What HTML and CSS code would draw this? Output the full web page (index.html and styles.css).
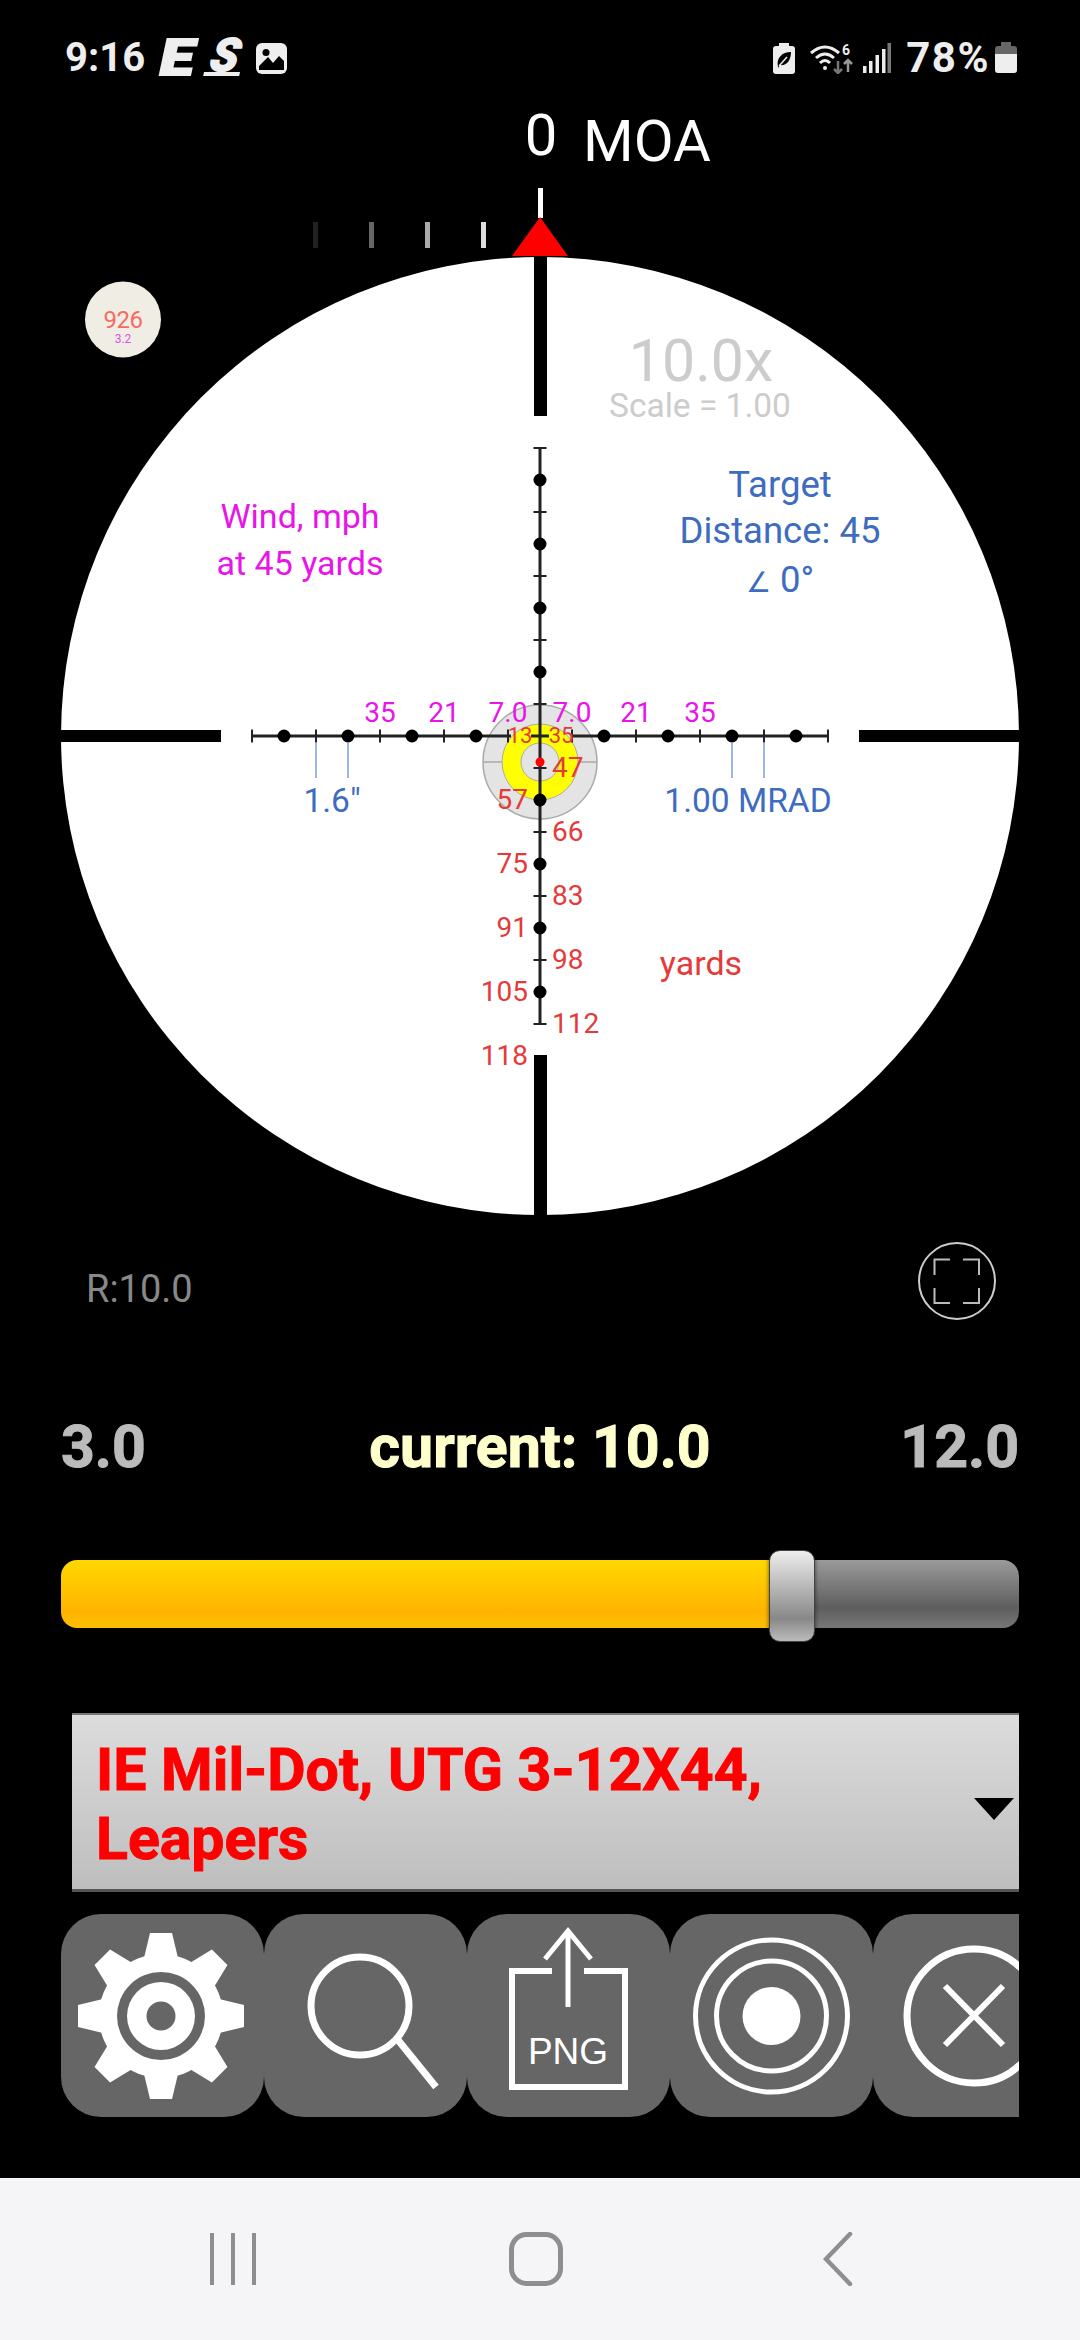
FILE: index.html
```html
<!DOCTYPE html>
<html lang="en">
<head>
    <meta charset="UTF-8">
    <meta name="viewport" content="width=device-width, initial-scale=1.0">
    <title>Reticle</title>
    <link rel="stylesheet" href="styles.css">
</head>
<body>
    <div class="status-bar">
        <div class="status-left">
            <span class="clock">9:16</span>
            <span class="logo-e">E</span>
            <span class="logo-s">S</span>
            <svg class="pic-icon" viewBox="0 0 31 31">
                <rect width="31" height="31" rx="6" fill="#eee"/>
                <circle cx="10" cy="9.500" r="3.500" fill="#000"/>
                <path d="M3 27V23L12 14L17 20L23 13L28 18V27Z" fill="#000"/>
            </svg>
        </div>
        <div class="status-right">
            <svg class="leaf-icon" viewBox="0 0 22 31">
                <path d="M6 0H16V3H19Q22 3 22 6V28Q22 31 19 31H3Q0 31 0 28V6Q0 3 3 3H6Z" fill="#eee"/>
                <path d="M5 24C3 15 9 9 18 9C18 18 13 23 7 22L5 25" fill="#000"/>
                <path d="M6 23L14 14" stroke="#eee" stroke-width="1.500" fill="none"/>
            </svg>
            <svg class="wifi-icon" viewBox="0 0 44 31">
                <path d="M1 10Q15 -2 29 10M6 15Q15 7 24 15M10 20Q15 15 20 20" fill="none" stroke="#eee" stroke-width="3"/>
                <circle cx="15" cy="25" r="2" fill="#eee"/>
                <text class="wifi-six" x="32" y="12">6</text>
                <path d="M28 18V30M24 26L28 30L32 26" fill="none" stroke="#777" stroke-width="2.500"/>
                <path d="M38 29V17M34 21L38 17L42 21" fill="none" stroke="#999" stroke-width="2.500"/>
            </svg>
            <svg class="signal-icon" viewBox="0 0 28 30">
                <rect x="0" y="23" width="3.500" height="7" fill="#eee"/>
                <rect x="6" y="18" width="3.500" height="12" fill="#eee"/>
                <rect x="12.500" y="12" width="3.500" height="18" fill="#eee"/>
                <rect x="19" y="6" width="3.500" height="24" fill="#eee"/>
                <rect x="24.500" y="0" width="3.500" height="30" fill="#777"/>
            </svg>
            <span class="battery-text">78%</span>
            <svg class="battery-icon" viewBox="0 0 22 31">
                <path d="M6 0H16V4H19Q22 4 22 7V12H0V7Q0 4 3 4H6Z" fill="#666"/>
                <path d="M0 12H22V28Q22 31 19 31H3Q0 31 0 28Z" fill="#eee"/>
            </svg>
        </div>
    </div>

    <!-- viewBox uses screen coords so the reticle numbers can be read off the shot -->
    <svg class="scope" viewBox="0 100 1080 1240">
        <text class="moa" x="541" y="155" text-anchor="middle">0</text>
        <text class="moa" x="583" y="161">MOA</text>

        <rect x="538" y="188" width="5" height="30" fill="#fff"/>
        <rect x="313" y="222" width="5" height="26" fill="#222"/>
        <rect x="369" y="222" width="5" height="26" fill="#666"/>
        <rect x="425" y="222" width="5" height="26" fill="#aaa"/>
        <rect x="481" y="222" width="5" height="26" fill="#ddd"/>

        <circle cx="540" cy="736" r="479" fill="#fff"/>
        <polygon points="540,217 568,256 512,256" fill="#f00"/>

        <rect x="534" y="257" width="13" height="159" fill="#000"/>
        <rect x="534" y="1055" width="13" height="160" fill="#000"/>
        <rect x="61" y="730" width="160" height="12" fill="#000"/>
        <rect x="859" y="730" width="160" height="12" fill="#000"/>

        <circle cx="123" cy="319.500" r="38" fill="#f0ede4"/>
        <text class="badge-num" x="123" y="328" text-anchor="middle">926</text>
        <text class="badge-sub" x="123" y="343" text-anchor="middle">3.2</text>

        <text class="power" x="701" y="381" text-anchor="middle">10.0x</text>
        <text class="scale-note" x="700" y="417" text-anchor="middle">Scale = 1.00</text>

        <text class="blue-label" x="780" y="497" text-anchor="middle">Target</text>
        <text class="blue-label" x="780" y="543" text-anchor="middle">Distance: 45</text>
        <text class="blue-label" x="780" y="592" text-anchor="middle"><tspan class="angle-mark">∠</tspan> 0°</text>

        <text class="wind-label" x="300" y="528" text-anchor="middle">Wind, mph</text>
        <text class="wind-label" x="300" y="575" text-anchor="middle">at 45 yards</text>

        <!-- target -->
        <circle cx="540" cy="762" r="57" fill="#e4e4e4" stroke="#aaa" stroke-width="1.500"/>
        <path d="M483 762H597" stroke="#aaa" stroke-width="1.500"/>
        <circle cx="540" cy="762" r="38" fill="#ff0" stroke="#aaa" stroke-width="1"/>
        <circle cx="540" cy="762" r="19" fill="#e4e4e4" stroke="#aaa" stroke-width="1"/>

        <!-- crosshair, horizontal line is broken where the 13 and 35 sit -->
        <path d="M252 736H511M531 736H549M573 736H828M540 448V1024" stroke="#222" stroke-width="3"/>
        <path d="M252 729.500v13M316 729.500v13M380 729.500v13M444 729.500v13M508 729.500v13M572 729.500v13M636 729.500v13M700 729.500v13M764 729.500v13M828 729.500v13" stroke="#222" stroke-width="2"/>
        <path d="M533.500 448h13M533.500 512h13M533.500 576h13M533.500 640h13M533.500 704h13M533.500 768h13M533.500 832h13M533.500 896h13M533.500 960h13M533.500 1024h13" stroke="#222" stroke-width="2"/>
        <path d="M284 736h0M348 736h0M412 736h0M476 736h0M604 736h0M668 736h0M732 736h0M796 736h0M540 480h0M540 544h0M540 608h0M540 672h0M540 800h0M540 864h0M540 928h0M540 992h0" stroke="#000" stroke-width="13" stroke-linecap="round"/>
        <circle cx="540" cy="762" r="4.500" fill="#f00"/>

        <!-- wind numbers -->
        <text class="wind-num" x="380" y="722" text-anchor="middle">35</text>
        <text class="wind-num" x="444" y="722" text-anchor="middle">21</text>
        <text class="wind-num" x="508" y="722" text-anchor="middle">7.0</text>
        <text class="wind-num" x="572" y="722" text-anchor="middle">7.0</text>
        <text class="wind-num" x="636" y="722" text-anchor="middle">21</text>
        <text class="wind-num" x="700" y="722" text-anchor="middle">35</text>

        <!-- range numbers -->
        <text class="range-small" x="520" y="743" text-anchor="middle">13</text>
        <text class="range-small" x="561" y="743" text-anchor="middle">35</text>
        <text class="range-num" x="552" y="777">47</text>
        <text class="range-num" x="528" y="809" text-anchor="end">57</text>
        <text class="range-num" x="552" y="841">66</text>
        <text class="range-num" x="528" y="873" text-anchor="end">75</text>
        <text class="range-num" x="552" y="905">83</text>
        <text class="range-num" x="528" y="937" text-anchor="end">91</text>
        <text class="range-num" x="552" y="969">98</text>
        <text class="range-num" x="528" y="1001" text-anchor="end">105</text>
        <text class="range-num" x="552" y="1033">112</text>
        <text class="range-num" x="528" y="1065" text-anchor="end">118</text>
        <text class="yards-label" x="701" y="975" text-anchor="middle">yards</text>

        <!-- subtension marks -->
        <path d="M316 743V778M348 743V778M732 743V778M764 743V778" stroke="#3d6cc0" stroke-width="1"/>
        <text class="sub-label" x="332" y="812" text-anchor="middle">1.6"</text>
        <text class="sub-label" x="748" y="812" text-anchor="middle">1.00 MRAD</text>

        <text class="range-readout" x="86" y="1302">R:10.0</text>
        <circle cx="957" cy="1281" r="38" fill="none" stroke="#ccc" stroke-width="2"/>
        <path d="M950 1259.500H934.500V1275M963 1259.500H979V1275M934.500 1288V1303H950M979 1288V1303H963" fill="none" stroke="#bbb" stroke-width="2"/>
    </svg>

    <div class="zoom-labels">
        <span class="zoom-end">3.0</span>
        <span class="zoom-current">current: 10.0</span>
        <span class="zoom-end zoom-max">12.0</span>
    </div>

    <div class="slider">
        <div class="slider-fill"></div>
        <div class="slider-rest"></div>
        <div class="slider-thumb"></div>
    </div>

    <div class="reticle-select">
        <div class="reticle-name">IE Mil-Dot, UTG 3-12X44, Leapers</div>
        <div class="select-arrow"></div>
    </div>

    <div class="toolbar">
        <button class="tool-btn" type="button">
            <svg viewBox="0 0 203 203">
                <defs>
                    <polygon id="tooth" points="-11,-83 11,-83 18,-54 -18,-54" fill="#fff"/>
                </defs>
                <g transform="translate(100 102)">
                    <use href="#tooth"/>
                    <use href="#tooth" transform="rotate(45)"/>
                    <use href="#tooth" transform="rotate(90)"/>
                    <use href="#tooth" transform="rotate(135)"/>
                    <use href="#tooth" transform="rotate(180)"/>
                    <use href="#tooth" transform="rotate(225)"/>
                    <use href="#tooth" transform="rotate(270)"/>
                    <use href="#tooth" transform="rotate(315)"/>
                    <circle r="62" fill="#fff"/>
                    <circle r="44" fill="#666"/>
                    <circle r="34" fill="#fff"/>
                    <circle r="14.500" fill="#666"/>
                </g>
            </svg>
        </button>
        <button class="tool-btn" type="button">
            <svg viewBox="0 0 203 203">
                <circle cx="96" cy="92" r="49" fill="none" stroke="#fff" stroke-width="7"/>
                <path d="M134 126L172 173" stroke="#fff" stroke-width="7"/>
            </svg>
        </button>
        <button class="tool-btn" type="button">
            <svg viewBox="0 0 203 203">
                <path d="M85 57H45V173H158V57H117" fill="none" stroke="#fff" stroke-width="6"/>
                <path d="M101 17V93M78 45L101 17L124 45" fill="none" stroke="#fff" stroke-width="5"/>
                <text class="png-label" x="101" y="150" text-anchor="middle">PNG</text>
            </svg>
        </button>
        <button class="tool-btn" type="button">
            <svg viewBox="0 0 203 203">
                <circle cx="101.500" cy="102" r="76" fill="none" stroke="#fff" stroke-width="5"/>
                <circle cx="101.500" cy="102" r="55" fill="none" stroke="#fff" stroke-width="5"/>
                <circle cx="101.500" cy="102" r="29" fill="#fff"/>
            </svg>
        </button>
        <button class="tool-btn" type="button">
            <svg viewBox="0 0 203 203">
                <circle cx="101" cy="102" r="67" fill="none" stroke="#fff" stroke-width="7"/>
                <path d="M72 72L130 131M130 72L72 131" stroke="#fff" stroke-width="6"/>
            </svg>
        </button>
    </div>

    <div class="nav-bar">
        <svg class="nav-recent" viewBox="0 0 48 52">
            <path d="M3 1V51M24 1V51M45 1V51" stroke="#8e8e8e" stroke-width="4" stroke-linecap="round"/>
        </svg>
        <svg class="nav-home" viewBox="0 0 54 54">
            <rect x="2.500" y="2.500" width="49" height="49" rx="15" fill="none" stroke="#8e8e8e" stroke-width="5"/>
        </svg>
        <svg class="nav-back" viewBox="0 0 30 54">
            <path d="M27 2L3 27L27 52" fill="none" stroke="#8e8e8e" stroke-width="4.500" stroke-linecap="round"/>
        </svg>
    </div>
</body>
</html>
```

FILE: styles.css
```css
body {
    font-family: Roboto, sans-serif;
    margin: 0;
    padding: 0;
    width: 1080px;
    height: 2340px;
    overflow: hidden;
    display: flex;
    flex-direction: column;
    background-color: #000;
}
.status-bar {
    height: 100px;
    flex: none;
    display: flex;
    justify-content: space-between;
    align-items: flex-start;
    padding: 40px 63px 0 65px;
    box-sizing: border-box;
    color: #eee;
}
.status-left, .status-right {
    display: flex;
    align-items: flex-start;
}
.clock {
    font-size: 40px;
    font-weight: 700;
    line-height: 36px;
    width: 95px;
}
.logo-e {
    font-size: 50px;
    font-weight: 900;
    font-style: italic;
    line-height: 36px;
    width: 47px;
    transform: scaleX(1.25);
    transform-origin: left center;
    -webkit-text-stroke: 2px #eee;
}
.logo-s {
    font-size: 46px;
    font-weight: 900;
    font-style: italic;
    line-height: 31px;
    width: 36px;
    height: 31px;
    margin-right: 13px;
    padding-bottom: 1px;
    border-bottom: 4px solid #eee;
    box-sizing: content-box;
    text-align: center;
    transform: skewX(-12deg);
    -webkit-text-stroke: 1.5px #eee;
}
.pic-icon {
    width: 31px;
    height: 31px;
    margin-top: 3px;
}
.leaf-icon {
    width: 22px;
    height: 31px;
    margin-top: 3px;
    margin-right: 15px;
}
.wifi-icon {
    width: 44px;
    height: 31px;
    margin-top: 3px;
    margin-right: 9px;
}
.wifi-six {
    font-size: 14px;
    font-weight: 700;
    fill: #eee;
}
.signal-icon {
    width: 28px;
    height: 30px;
    margin-top: 3px;
    margin-right: 15px;
}
.battery-text {
    font-size: 42px;
    font-weight: 700;
    line-height: 36px;
    letter-spacing: 1.500px;
    margin-right: 5px;
}
.battery-icon {
    width: 22px;
    height: 31px;
    margin-top: 2px;
}
.scope {
    display: block;
    flex: none;
    width: 1080px;
    height: 1240px;
}
.moa {
    font-size: 58px;
    fill: #fff;
}
.badge-num {
    font-size: 24px;
    letter-spacing: -0.5px;
    fill: #f76a64;
}
.badge-sub {
    font-size: 12px;
    fill: #e050e8;
}
.power {
    font-size: 59px;
    fill: #ccc;
}
.scale-note {
    font-size: 33.500px;
    fill: #ccc;
}
.blue-label {
    font-size: 36.500px;
    fill: #3d6cc0;
}
.angle-mark {
    font-size: 28px;
}
.wind-label {
    font-size: 34px;
    fill: #e815e8;
}
.wind-num {
    font-size: 28px;
    fill: #e815e8;
}
.range-num {
    font-size: 28px;
    fill: #e53a3a;
}
.range-small {
    font-size: 22px;
    fill: #e53a3a;
}
.yards-label {
    font-size: 34px;
    fill: #e53a3a;
}
.sub-label {
    font-size: 33.500px;
    fill: #3d6cc0;
}
.range-readout {
    font-size: 38px;
    fill: #888;
}
.zoom-labels {
    display: grid;
    grid-template-columns: 1fr auto 1fr;
    padding: 0 61px;
    margin-top: 72px;
    font-size: 59px;
    font-weight: 700;
    line-height: 70px;
    -webkit-text-stroke: 1px;
}
.zoom-end {
    color: #bbb;
}
.zoom-max {
    text-align: right;
}
.zoom-current {
    color: #ffc;
}
.slider {
    position: relative;
    display: flex;
    height: 68px;
    margin: 78px 61px 0;
    border-radius: 16px;
}
.slider-fill {
    width: 720px;
    border-radius: 16px 0 0 16px;
    background: linear-gradient(#ffd800, #ffb400 75%, #ffbe00);
}
.slider-rest {
    flex: 1;
    border-radius: 0 16px 16px 0;
    background: linear-gradient(#9a9a9a, #5e5e5e 70%, #777);
}
.slider-thumb {
    position: absolute;
    left: 708px;
    top: -10px;
    width: 46px;
    height: 92px;
    box-sizing: border-box;
    border: 1px solid #444;
    border-radius: 11px;
    background: linear-gradient(#eee, #888 75%, #bbb);
    box-shadow: 0 0 4px rgba(0, 0, 0, 0.6);
}
.reticle-select {
    display: flex;
    align-items: flex-start;
    justify-content: space-between;
    height: 179px;
    margin: 85px 61px 0 72px;
    padding: 20px 5px 0 24px;
    box-sizing: border-box;
    border-top: 2px solid #777;
    border-bottom: 3px solid #555;
    background: linear-gradient(#dcdcdc, #bebebe);
}
.reticle-name {
    width: 760px;
    font-size: 59px;
    font-weight: 700;
    line-height: 69px;
    color: #f00;
    -webkit-text-stroke: 1px #f00;
}
.select-arrow {
    width: 0;
    height: 0;
    margin-top: 63px;
    border-left: 20px solid transparent;
    border-right: 20px solid transparent;
    border-top: 22px solid #000;
}
.toolbar {
    display: flex;
    margin: 22px 61px 0;
    overflow: hidden;
}
.tool-btn {
    flex: none;
    width: 203px;
    height: 203px;
    padding: 0;
    border: none;
    border-radius: 40px;
    background-color: #666;
}
.tool-btn svg {
    display: block;
    width: 203px;
    height: 203px;
}
.png-label {
    font-family: "Liberation Sans", Arial, sans-serif;
    font-size: 37px;
    fill: #fff;
}
.nav-bar {
    margin-top: auto;
    height: 162px;
    flex: none;
    display: flex;
    align-items: center;
    padding-left: 209px;
    box-sizing: border-box;
    background-color: #f5f5f7;
}
.nav-recent {
    width: 48px;
    height: 52px;
}
.nav-home {
    width: 54px;
    height: 54px;
    margin-left: 252px;
}
.nav-back {
    width: 30px;
    height: 54px;
    margin-left: 260px;
}
```
